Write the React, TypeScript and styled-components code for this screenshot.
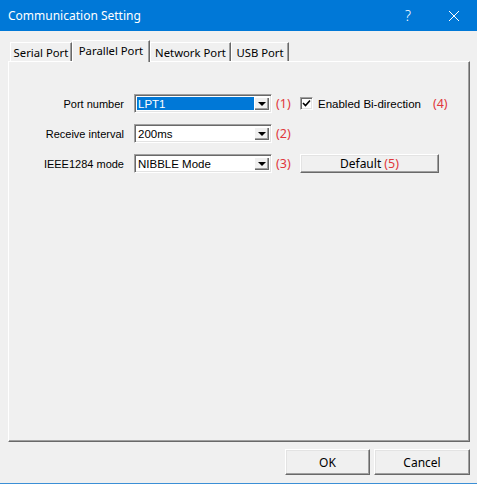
import styled, { createGlobalStyle } from 'styled-components'

const GlobalStyle = createGlobalStyle`
  html, body {
    margin: 0;
    padding: 0;
    background: #f0f0f0;
  }
  * {
    box-sizing: border-box;
  }
`

const Window = styled.div`
  width: 477px;
  height: 484px;
  display: flex;
  flex-direction: column;
  background: #f0f0f0;
  border-bottom: 1px solid #3b8fd6;
  font-family: 'Liberation Sans', Arial, sans-serif;
  color: #000;
`

const TitleBar = styled.div`
  height: 31px;
  flex: none;
  display: flex;
  align-items: center;
  background: #0078d7;
  color: #fff;
  font-family: 'Noto Sans', 'Liberation Sans', sans-serif;
  font-size: 12px;
`

const Title = styled.span`
  flex: 1;
  padding-left: 8px;
`

const CaptionButton = styled.span`
  width: 46px;
  height: 31px;
  display: flex;
  align-items: center;
  justify-content: center;
  font-size: 14px;
  font-weight: 300;
`

const Body = styled.div`
  flex: 1;
  display: flex;
  flex-direction: column;
  padding: 9px 7px 0 8px;
`

const TabRow = styled.div`
  display: flex;
  align-items: flex-end;
  height: 21px;
  padding-left: 2px;
  position: relative;
  z-index: 1;
`

const Tab = styled.div<{ $active?: boolean; $width: number }>`
  width: ${(p) => p.$width}px;
  height: ${(p) => (p.$active ? 22 : 19)}px;
  margin-bottom: ${(p) => (p.$active ? -1 : 0)}px;
  display: flex;
  align-items: center;
  justify-content: center;
  padding-bottom: ${(p) => (p.$active ? 3 : 0)}px;
  font-family: 'Noto Sans', 'Liberation Sans', sans-serif;
  font-size: 11.3px;
  white-space: nowrap;
  background: #f0f0f0;
  border-top: 1px solid #fff;
  border-left: 1px solid #fff;
  border-right: 1px solid #696969;
  box-shadow: inset -1px 0 0 #a0a0a0;
`

const Panel = styled.div`
  height: 381px;
  border: 1px solid;
  border-color: #fff #696969 #696969 #fff;
  box-shadow: inset -1px -1px 0 #a0a0a0;
  padding: 32px 0 0 0;
  display: flex;
  flex-direction: column;
  gap: 11px;
`

const Row = styled.div`
  display: flex;
  align-items: center;
  height: 19px;
`

const Label = styled.span`
  width: 115px;
  text-align: right;
  font-size: 11px;
`

const Combo = styled.div`
  width: 138px;
  height: 19px;
  margin-left: 10px;
  display: flex;
  background: #fff;
  border: 1px solid;
  border-color: #a0a0a0 #fff #fff #a0a0a0;
  box-shadow: inset 1px 1px 0 #696969, inset -1px -1px 0 #e3e3e3;
  padding: 2px;
`

const ComboValue = styled.span<{ $selected?: boolean }>`
  flex: 1;
  display: flex;
  align-items: center;
  padding-left: 1px;
  font-size: 11.5px;
  background: ${(p) => (p.$selected ? '#0078d7' : '#fff')};
  color: ${(p) => (p.$selected ? '#fff' : '#000')};
`

const DropButton = styled.span`
  width: 15px;
  display: flex;
  align-items: center;
  justify-content: center;
  background: #f0f0f0;
  box-shadow: inset 1px 1px 0 #fff, inset -1px -1px 0 #696969, inset -2px -2px 0 #a0a0a0;

  &::after {
    content: '';
    border-left: 4px solid transparent;
    border-right: 4px solid transparent;
    border-top: 4px solid #000;
    margin-top: 1px;
  }
`

const Note = styled.span`
  color: #e0373b;
  font-family: 'Noto Sans', 'Liberation Sans', sans-serif;
  font-size: 12.5px;
`

const NoteSlot = styled(Note)`
  width: 24px;
  margin-left: 4px;
`

const CheckLabel = styled.label`
  display: flex;
  align-items: center;
  gap: 5px;
  font-size: 11.5px;
`

const CheckBox = styled.span`
  width: 13px;
  height: 13px;
  display: flex;
  align-items: center;
  justify-content: center;
  background: #fff;
  border: 1px solid;
  border-color: #a0a0a0 #fff #fff #a0a0a0;
  box-shadow: inset 1px 1px 0 #696969, inset -1px -1px 0 #e3e3e3;
`

const CheckText = styled.span`
  margin-right: 7px;
`

const ClassicButton = styled.button<{ $width: number; $height: number }>`
  width: ${(p) => p.$width}px;
  height: ${(p) => p.$height}px;
  padding: 0;
  background: #f0f0f0;
  border: 1px solid;
  border-color: #fff #696969 #696969 #fff;
  box-shadow: inset -1px -1px 0 #a0a0a0, inset 1px 1px 0 #e3e3e3;
  font-family: 'Noto Sans', 'Liberation Sans', sans-serif;
  font-size: 12px;
  color: #000;
`

const Footer = styled.div`
  display: flex;
  justify-content: flex-end;
  gap: 4px;
  padding: 7px 0 0 0;
`

const tabs = [
  { name: 'Serial Port', width: 62 },
  { name: 'Parallel Port', width: 78, active: true },
  { name: 'Network Port', width: 81 },
  { name: 'USB Port', width: 58 },
]

const rows = [
  { label: 'Port number', value: 'LPT1', note: '(1)', selected: true },
  { label: 'Receive interval', value: '200ms', note: '(2)' },
  { label: 'IEEE1284 mode', value: 'NIBBLE Mode', note: '(3)' },
]

export default function App() {
  return (
    <>
      <GlobalStyle />
      <Window>
        <TitleBar>
          <Title>Communication Setting</Title>
          <CaptionButton>?</CaptionButton>
          <CaptionButton>
            <svg width='10' height='10' viewBox='0 0 10 10'>
              <path d='M0 0L10 10M10 0L0 10' stroke='#fff' strokeWidth='1' />
            </svg>
          </CaptionButton>
        </TitleBar>

        <Body>
          <TabRow>
            {tabs.map((tab) => (
              <Tab key={tab.name} $width={tab.width} $active={tab.active}>
                {tab.name}
              </Tab>
            ))}
          </TabRow>

          <Panel>
            {rows.map((row, i) => (
              <Row key={row.label}>
                <Label>{row.label}</Label>
                <Combo>
                  <ComboValue $selected={row.selected}>{row.value}</ComboValue>
                  <DropButton />
                </Combo>
                <NoteSlot>{row.note}</NoteSlot>
                {i === 0 && (
                  <CheckLabel>
                    <CheckBox>
                      <svg width='9' height='9' viewBox='0 0 9 9'>
                        <path d='M1 4L3.5 6.5L8 1.5' stroke='#000' strokeWidth='1.6' fill='none' />
                      </svg>
                    </CheckBox>
                    <CheckText>Enabled Bi-direction</CheckText>
                    <Note>(4)</Note>
                  </CheckLabel>
                )}
                {i === 2 && (
                  <ClassicButton $width={139} $height={19}>
                    Default <Note>(5)</Note>
                  </ClassicButton>
                )}
              </Row>
            ))}
          </Panel>

          <Footer>
            <ClassicButton $width={85} $height={26}>OK</ClassicButton>
            <ClassicButton $width={96} $height={26}>Cancel</ClassicButton>
          </Footer>
        </Body>
      </Window>
    </>
  )
}
